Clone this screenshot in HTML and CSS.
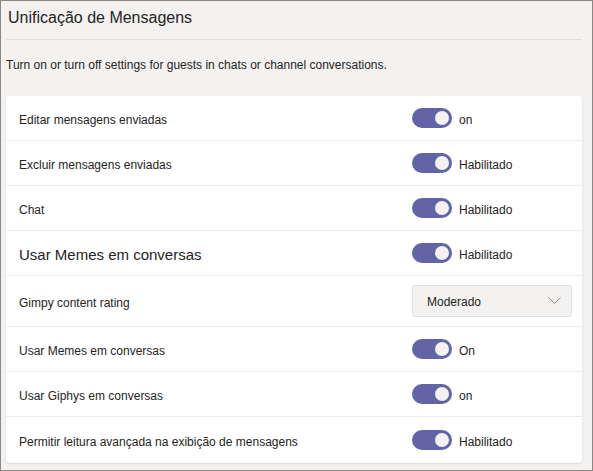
FILE: index.html
```html
<!DOCTYPE html>
<html lang="pt">
<head>
<meta charset="utf-8">
<link rel="stylesheet" href="styles.css">
</head>
<body>
<div class="frame">
  <header class="header"><h1 class="title">Unificação de Mensagens</h1></header>
  <p class="intro">Turn on or turn off settings for guests in chats or channel conversations.</p>
  <section class="card">
    <div class="row">
      <span class="label">Editar mensagens enviadas</span>
      <span class="control"><span class="toggle"><span class="knob"></span></span><span class="state">on</span></span>
    </div>
    <div class="row">
      <span class="label">Excluir mensagens enviadas</span>
      <span class="control"><span class="toggle"><span class="knob"></span></span><span class="state">Habilitado</span></span>
    </div>
    <div class="row">
      <span class="label">Chat</span>
      <span class="control"><span class="toggle"><span class="knob"></span></span><span class="state">Habilitado</span></span>
    </div>
    <div class="row">
      <span class="label label-lg">Usar Memes em conversas</span>
      <span class="control"><span class="toggle"><span class="knob"></span></span><span class="state">Habilitado</span></span>
    </div>
    <div class="row row-tall">
      <span class="label">Gimpy content rating</span>
      <span class="control">
        <span class="select"><span class="select-text">Moderado</span>
          <svg class="chev" width="13" height="7" viewBox="0 0 13 7"><path d="M0.5 0.5 L6.5 6.5 L12.5 0.5" fill="none" stroke="#8a8886" stroke-width="1"/></svg>
        </span>
      </span>
    </div>
    <div class="row">
      <span class="label">Usar Memes em conversas</span>
      <span class="control"><span class="toggle"><span class="knob"></span></span><span class="state">On</span></span>
    </div>
    <div class="row">
      <span class="label">Usar Giphys em conversas</span>
      <span class="control"><span class="toggle"><span class="knob"></span></span><span class="state">on</span></span>
    </div>
    <div class="row row-last">
      <span class="label">Permitir leitura avançada na exibição de mensagens</span>
      <span class="control"><span class="toggle"><span class="knob"></span></span><span class="state">Habilitado</span></span>
    </div>
  </section>
</div>
</body>
</html>
```
FILE: styles.css
```css
* { box-sizing: border-box; }
html, body { margin: 0; padding: 0; }
body {
  font-family: "Liberation Sans", Arial, sans-serif;
  color: #252423;
}
.frame {
  width: 593px;
  height: 471px;
  border: 1px solid #8a8886;
  background: #f3f2f1;
  padding: 0 10px 0 5px;
}
.header {
  height: 39px;
  border-bottom: 1px solid #e1dfdd;
  padding: 7px 0 0 2px;
}
.title {
  margin: 0;
  font-size: 16px;
  font-weight: 400;
  line-height: 20px;
}
.intro {
  margin: 0;
  padding: 17px 0 0 0;
  height: 56px;
  font-size: 12px;
  line-height: 16px;
}
.card {
  background: #fff;
  border-radius: 4px;
  box-shadow: 0 1px 2px rgba(0,0,0,0.12);
}
.row {
  display: grid;
  grid-template-columns: 393px 1fr;
  align-items: center;
  height: 45px;
  padding-left: 13px;
  border-bottom: 1px solid #edebe9;
}
.row-tall { height: 51px; }
.row-last { border-bottom: 0; height: 46px; }
.label {
  font-size: 12px;
  line-height: 16px;
  padding-top: 4px;
}
.label-lg { font-size: 15px; padding-top: 4px; }
.control {
  display: flex;
  align-items: center;
}
.toggle {
  width: 40px;
  height: 20px;
  border-radius: 10px;
  background: #6264a7;
  display: flex;
  justify-content: flex-end;
  align-items: center;
  padding-right: 3px;
  flex: none;
}
.knob {
  width: 14px;
  height: 14px;
  border-radius: 50%;
  background: #f3f2f1;
}
.state {
  margin-left: 7px;
  font-size: 12px;
  line-height: 16px;
  padding-top: 3px;
}
.select {
  width: 160px;
  height: 32px;
  background: #f3f2f1;
  border: 1px solid #e1dfdd;
  border-radius: 3px;
  display: flex;
  align-items: center;
  justify-content: space-between;
  padding: 2px 10px 0 14px;
}
.select-text { font-size: 12px; }
.chev { margin-top: -4px; }
```
